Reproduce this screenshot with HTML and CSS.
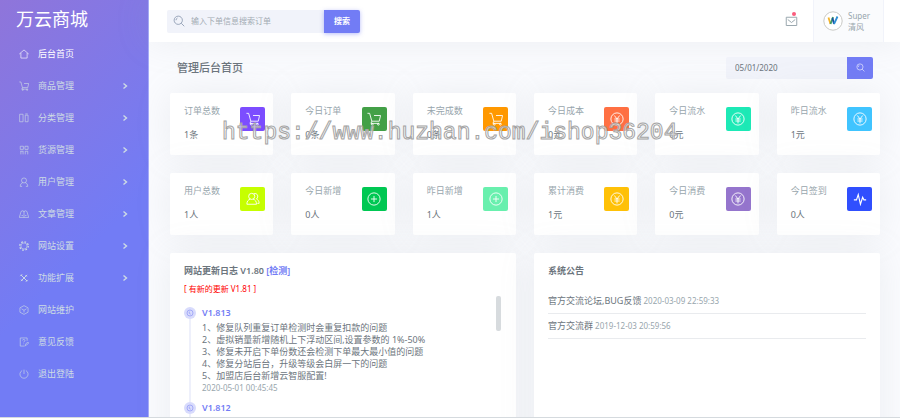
FILE: index.html
```html
<!DOCTYPE html>
<html lang="zh-CN">
<head>
  <meta charset="UTF-8">
  <meta name="viewport" content="width=device-width, initial-scale=1.0">
  <title>万云商城</title>
  <link rel="stylesheet" href="styles.css">
</head>
<body>
  <!-- Icon set -->
  <svg class="sprite" aria-hidden="true">
    <symbol id="i-home" viewBox="0 0 16 16"><path d="M.5 8L8 1.500 15.500 8M3 6.500v8h10v-8"/></symbol>
    <symbol id="i-cart" viewBox="0 0 16 16"><path d="M.5 1.500h2.500l2.500 9h8.500L15.500 4H8M5.500 10.500l-1 2.500h9.500"/><circle cx="6" cy="14" r="1"/><circle cx="13" cy="14" r="1"/></symbol>
    <symbol id="i-columns" viewBox="0 0 16 16"><path d="M1 2h5.500v12H1zM10 3.500h4.500V14H10zM10 1.500h4"/></symbol>
    <symbol id="i-grid" viewBox="0 0 16 16"><path d="M2 2h5v5H2zM9.500 2h5v5h-5zM2 10h5M3 10v5M6.500 10v5M10 10v5M14 10v5M10 10h4"/></symbol>
    <symbol id="i-user" viewBox="0 0 16 16"><circle cx="8" cy="5.500" r="4"/><path d="M6 9c-2.500 1-4 3-4 6h3M10 9c2.500 1 4 3 4 6h-3"/></symbol>
    <symbol id="i-book" viewBox="0 0 16 16"><path d="M8 13.500V5c0-3-4.500-3-5 0L.5 13.500h15L13 5c-.5-3-5-3-5 0M4 10.500h2.500M9.500 10.500H12"/></symbol>
    <symbol id="i-gear" viewBox="0 0 16 16"><circle cx="8" cy="8" r="5"/><circle cx="8" cy="8" r="6.800" stroke-width="2" stroke-dasharray="2.670 2.670"/></symbol>
    <symbol id="i-tools" viewBox="0 0 16 16"><path d="M3 3l10 10M13 3L3 13M2 5l3-3M10.500 3.500l2 2M3.500 10.500l2 2M11 14l3-3" stroke-width="1.500"/></symbol>
    <symbol id="i-box" viewBox="0 0 16 16"><path d="M8 1l6.500 3.500v7L8 15l-6.500-3.500v-7zM4 6l4 2.500L12 6M8 8.500V12"/></symbol>
    <symbol id="i-note" viewBox="0 0 16 16"><path d="M13 6V1.500H2v13h7M5.500 5.500c0-2 4-2 4 0 0 1.500-2 1.500-2 3M7.500 10.500v1M10 14l.5-2.500L14 8l1.500 1.500L12 13z"/></symbol>
    <symbol id="i-power" viewBox="0 0 16 16"><path d="M5 2.500a6.500 6.500 0 1 0 6 0M8 1v7"/></symbol>
    <symbol id="i-right" viewBox="0 0 8 8"><path d="M2.500 1.500L5.500 4 2.500 6.500" stroke-width="1.400"/></symbol>
    <symbol id="i-search" viewBox="0 0 16 16"><circle cx="7" cy="7" r="5.500"/><path d="M11 11l4 4M4 7a3 3 0 0 1 2-3"/></symbol>
    <symbol id="i-mail" viewBox="0 0 16 16"><path d="M1 3h14v11H1zM3 6l5 4 5-4" stroke-width="1.300"/></symbol>
    <symbol id="i-users" viewBox="0 0 16 16"><circle cx="6.500" cy="5" r="3.500"/><path d="M5 8c-2.500 1-4 2.500-4 6h11c0-3.500-1.500-5-4-6M9 2c4-1.500 6 3.500 3 6 2 1 3 2.500 3 5h-2"/></symbol>
    <symbol id="i-plus" viewBox="0 0 16 16"><circle cx="8" cy="8" r="7"/><path d="M8 4.500v7M4.500 8h7"/></symbol>
    <symbol id="i-yen" viewBox="0 0 16 16"><circle cx="8" cy="8" r="7"/><path d="M5 4l3 4 3-4M8 8v5M5 8h6M5 10.300h6"/></symbol>
    <symbol id="i-pulse" viewBox="0 0 16 16"><path d="M1 9h3l2-6 2.500 11L11 6l1.500 3H15" stroke-width="1.300"/></symbol>
    <symbol id="i-clock" viewBox="0 0 16 16"><circle cx="8" cy="8" r="6"/><path d="M6.500 5v3.500l3 2"/></symbol>
  </svg>

  <div class="wrapper">
    <!-- Sidebar -->
    <aside class="sidebar">
      <a class="logo" href="#">万云商城</a>
      <nav class="menu">
        <a class="active" href="#"><svg><use href="#i-home"/></svg><span>后台首页</span></a>
        <a href="#"><svg><use href="#i-cart"/></svg><span>商品管理</span><svg class="arrow"><use href="#i-right"/></svg></a>
        <a href="#"><svg><use href="#i-columns"/></svg><span>分类管理</span><svg class="arrow"><use href="#i-right"/></svg></a>
        <a href="#"><svg><use href="#i-grid"/></svg><span>货源管理</span><svg class="arrow"><use href="#i-right"/></svg></a>
        <a href="#"><svg><use href="#i-user"/></svg><span>用户管理</span><svg class="arrow"><use href="#i-right"/></svg></a>
        <a href="#"><svg><use href="#i-book"/></svg><span>文章管理</span><svg class="arrow"><use href="#i-right"/></svg></a>
        <a href="#"><svg><use href="#i-gear"/></svg><span>网站设置</span><svg class="arrow"><use href="#i-right"/></svg></a>
        <a href="#"><svg><use href="#i-tools"/></svg><span>功能扩展</span><svg class="arrow"><use href="#i-right"/></svg></a>
        <a href="#"><svg><use href="#i-box"/></svg><span>网站维护</span></a>
        <a href="#"><svg><use href="#i-note"/></svg><span>意见反馈</span></a>
        <a href="#"><svg><use href="#i-power"/></svg><span>退出登陆</span></a>
      </nav>
    </aside>

    <div class="content">
      <!-- Topbar -->
      <header class="topbar">
        <form class="search">
          <label class="search-box"><svg><use href="#i-search"/></svg><input type="text" placeholder="输入下单信息搜索订单" aria-label="搜索订单"></label>
          <button type="button">搜索</button>
        </form>
        <a class="mail" href="#" aria-label="消息"><svg><use href="#i-mail"/></svg><i class="dot"></i></a>
        <a class="profile" href="#">
          <svg class="avatar" viewBox="0 0 20 20">
            <circle cx="10" cy="10" r="9.200" fill="#fff" stroke="#c9c9c6"/>
            <path d="M5.500 6.500l2 6.500" stroke="#f3b32b" stroke-width="1.800"/>
            <path d="M7.500 13l2.500-7" stroke="#3d9b6a" stroke-width="1.800"/>
            <path d="M9.500 7l1.500 6" stroke="#1b4f9c" stroke-width="1.800"/>
            <path d="M11 13L14.500 5.500" stroke="#2d8fd5" stroke-width="1.800"/>
          </svg>
          <span>Super<br>清风</span>
        </a>
      </header>

      <main>
        <div class="title-row">
          <h1>管理后台首页</h1>
          <form class="date">
            <input type="text" value="05/01/2020" aria-label="日期">
            <button type="button" aria-label="查询"><svg><use href="#i-search"/></svg></button>
          </form>
        </div>

        <!-- Statistics -->
        <section class="stats">
          <div class="card stat"><div><h2>订单总数</h2><p>1条</p></div><span class="icon violet"><svg><use href="#i-cart"/></svg></span></div>
          <div class="card stat"><div><h2>今日订单</h2><p>0条</p></div><span class="icon green"><svg><use href="#i-cart"/></svg></span></div>
          <div class="card stat"><div><h2>未完成数</h2><p>0条</p></div><span class="icon orange"><svg><use href="#i-cart"/></svg></span></div>
          <div class="card stat"><div><h2>今日成本</h2><p>0元</p></div><span class="icon coral"><svg><use href="#i-yen"/></svg></span></div>
          <div class="card stat"><div><h2>今日流水</h2><p>0元</p></div><span class="icon teal"><svg><use href="#i-yen"/></svg></span></div>
          <div class="card stat"><div><h2>昨日流水</h2><p>1元</p></div><span class="icon sky"><svg><use href="#i-yen"/></svg></span></div>
          <div class="card stat"><div><h2>用户总数</h2><p>1人</p></div><span class="icon lime"><svg><use href="#i-users"/></svg></span></div>
          <div class="card stat"><div><h2>今日新增</h2><p>0人</p></div><span class="icon emerald"><svg><use href="#i-plus"/></svg></span></div>
          <div class="card stat"><div><h2>昨日新增</h2><p>1人</p></div><span class="icon mint"><svg><use href="#i-plus"/></svg></span></div>
          <div class="card stat"><div><h2>累计消费</h2><p>1元</p></div><span class="icon amber"><svg><use href="#i-yen"/></svg></span></div>
          <div class="card stat"><div><h2>今日消费</h2><p>0元</p></div><span class="icon purple"><svg><use href="#i-yen"/></svg></span></div>
          <div class="card stat"><div><h2>今日签到</h2><p>0人</p></div><span class="icon blue"><svg><use href="#i-pulse"/></svg></span></div>
        </section>

        <section class="panels">
          <!-- Update log -->
          <div class="card panel">
            <h3>网站更新日志 V1.80 <a href="#">[检测]</a></h3>
            <p class="update">[ 有新的更新 V1.81 ]</p>
            <div class="timeline">
              <div class="entry">
                <span class="marker"><svg><use href="#i-clock"/></svg></span>
                <div>
                  <h4>V1.813</h4>
                  <p>1、修复队列重复订单检测时会重复扣款的问题<br>
                  2、虚拟销量新增随机上下浮动区间,设置参数的 1%-50%<br>
                  3、修复未开启下单份数还会检测下单最大最小值的问题<br>
                  4、修复分站后台，升级等级会白屏一下的问题<br>
                  5、加盟店后台新增云智服配置!</p>
                  <time>2020-05-01 00:45:45</time>
                </div>
              </div>
              <div class="entry">
                <span class="marker"><svg><use href="#i-clock"/></svg></span>
                <div>
                  <h4>V1.812</h4>
                </div>
              </div>
              <i class="thumb"></i>
            </div>
          </div>

          <!-- Notices -->
          <div class="card panel">
            <h3>系统公告</h3>
            <ul class="notices">
              <li><a href="#">官方交流论坛,BUG反馈</a> <time>2020-03-09 22:59:33</time></li>
              <li><a href="#">官方交流群</a> <time>2019-12-03 20:59:56</time></li>
            </ul>
          </div>
        </section>
      </main>
    </div>
  </div>
  <div class="watermark">https://www.huzhan.com/ishop36204</div>
</body>
</html>
```

FILE: styles.css
```css
/* General */
* {
  box-sizing: border-box;
}
body {
  margin: 0;
  background: #fff;
  color: #6c757d;
  font-family: "Noto Sans", "Noto Sans CJK SC", sans-serif;
  font-size: 8px;
  line-height: 12px;
  overflow: hidden;
}
h1, h2, h3, h4, p, ul {
  margin: 0;
  padding: 0;
}
a {
  color: inherit;
  text-decoration: none;
}
input, button {
  font: inherit;
  border: 0;
  margin: 0;
}
svg {
  fill: none;
  stroke: currentColor;
  flex: none;
}
.sprite {
  display: none;
}
.wrapper {
  display: flex;
  height: calc(100vh - 1px);
  border-bottom: 1px solid #d5dade;
  overflow: hidden;
}

/* Sidebar */
.sidebar {
  width: 149px;
  flex: none;
  color: #cedce4;
  background: linear-gradient(135deg, #8f75da 0%, #727cf5 60%);
  border-right: 1px solid #a5abf8;
}
.logo {
  display: block;
  padding-left: 16px;
  color: #fff;
  font-size: 18px;
  line-height: 38px;
}
.menu a {
  display: flex;
  align-items: center;
  height: 32px;
  padding: 0 19px;
  font-size: 9px;
}
.menu svg {
  width: 10px;
  height: 10px;
}
.menu span {
  flex: 1;
  margin-left: 9px;
}
.menu .active {
  color: #fff;
}
.menu .arrow {
  width: 8px;
  height: 8px;
}

/* Topbar */
.content {
  flex: 1;
  min-width: 0;
  background: #fafbfe;
}
.topbar {
  display: flex;
  align-items: center;
  height: 42px;
  padding: 0 16px 0 18px;
  background: #fff;
  box-shadow: 0 0 35px rgba(154, 161, 171, 0.15);
}
.search {
  display: flex;
  margin-right: auto;
}
.search-box {
  display: flex;
  align-items: center;
  width: 157px;
  height: 23px;
  padding-left: 6px;
  background: #f1f3fa;
  border-radius: 2px 0 0 2px;
}
.search-box svg {
  width: 12px;
  height: 12px;
  color: #7d8da5;
}
.search-box input {
  flex: 1;
  min-width: 0;
  padding: 0 6px;
  background: none;
}
input {
  color: #6c757d;
}
input::placeholder {
  color: #a3abb3;
}
.search button {
  width: 36px;
  padding: 0;
  color: #fff;
  font-weight: bold;
  background: #727cf5;
  border-radius: 0 2px 2px 0;
  box-shadow: 0 1px 4px rgba(114, 124, 245, 0.5);
}
.mail {
  position: relative;
  display: flex;
  margin-right: 15px;
  color: #98a6ad;
}
.mail svg {
  width: 13px;
  height: 12px;
}
.dot {
  position: absolute;
  top: -3px;
  right: 2px;
  width: 4px;
  height: 4px;
  border-radius: 50%;
  background: #fa5c7c;
}
.profile {
  display: flex;
  align-items: center;
  gap: 5px;
  width: 71px;
  height: 42px;
  padding-left: 9px;
  color: #98a6ad;
  line-height: 11px;
  background: #fafbfd;
  border: 1px solid #f1f3fa;
  border-width: 0 1px;
}
.avatar {
  width: 20px;
  height: 20px;
}

/* Title row */
main {
  padding: 0 20px 0 21px;
}
.title-row {
  display: flex;
  justify-content: space-between;
  align-items: center;
  height: 51px;
  padding: 0 7px;
}
h1 {
  font-size: 11px;
  font-weight: 500;
}
.date {
  display: flex;
  height: 22px;
}
.date input {
  width: 121px;
  padding: 0 9px;
  background: #f1f3fa;
  border-radius: 2px 0 0 2px;
}
.date button {
  display: flex;
  align-items: center;
  justify-content: center;
  width: 26px;
  padding: 0;
  color: #fff;
  background: #727cf5;
  border-radius: 0 2px 2px 0;
}
.date svg {
  width: 9px;
  height: 9px;
}

/* Cards */
.card {
  background: #fff;
  border-radius: 2px;
  box-shadow: 0 0 35px rgba(154, 161, 171, 0.15);
}
.stats {
  display: grid;
  grid-template-columns: repeat(6, 1fr);
  gap: 18px;
}
.stat {
  display: flex;
  justify-content: space-between;
  padding: 11px 8px 13px 14px;
  font-size: 9px;
  line-height: 14px;
}
.stat h2 {
  margin-bottom: 10px;
  color: #98a6ad;
  font-size: 9px;
  font-weight: 400;
}
.icon {
  display: flex;
  align-items: center;
  justify-content: center;
  width: 25px;
  height: 24px;
  margin-top: 3px;
  color: #fff;
  border-radius: 2px;
}
.icon svg {
  width: 14px;
  height: 14px;
}
.violet { background: #7c4dff; }
.green { background: #43a047; }
.orange { background: #ff9800; }
.coral { background: #ff7043; }
.teal { background: #1de9b6; }
.sky { background: #40c4ff; }
.lime { background: #c6ff00; }
.emerald { background: #00c853; }
.mint { background: #69f0ae; }
.amber { background: #ffc107; }
.purple { background: #9575cd; }
.blue { background: #304ffe; }

/* Panels */
.panels {
  display: grid;
  grid-template-columns: 1fr 1fr;
  gap: 18px;
  margin-top: 18px;
}
.panel {
  min-height: 240px;
  padding: 11px 14px;
}
h3 {
  font-size: 9px;
  font-weight: 600;
  line-height: 14px;
}
h3 a, h4 {
  color: #727cf5;
}
.update {
  margin-top: 5px;
  color: #f00;
}
.timeline {
  position: relative;
  margin-top: 12px;
}
.entry {
  display: flex;
  gap: 6px;
  padding-bottom: 8px;
  background: linear-gradient(#eef0fb, #eef0fb) 5px 0 / 2px 100% no-repeat;
}
.entry p {
  font-size: 9px;
}
.entry time {
  display: block;
}
.marker {
  display: flex;
  align-items: center;
  justify-content: center;
  flex: none;
  width: 12px;
  height: 12px;
  color: #727cf5;
  background: #d8dbfc;
  border-radius: 50%;
}
.marker svg {
  width: 8px;
  height: 8px;
}
h4 {
  margin-bottom: 3px;
  font-size: 9px;
  font-weight: 600;
}
time {
  color: #98a6ad;
}
.thumb {
  position: absolute;
  top: -11px;
  right: 1px;
  width: 5px;
  height: 35px;
  border-radius: 2px;
  background: #d7dbde;
}
.notices {
  margin-top: 11px;
  list-style: none;
}
.notices li {
  padding: 6px 0;
  border-bottom: 1px solid #e9ebee;
}
.notices a {
  font-size: 9px;
}

/* Watermark over the page */
.watermark {
  position: absolute;
  top: 119px;
  left: 222px;
  color: rgba(255, 255, 255, 0.6);
  font-family: "Liberation Mono", monospace;
  font-size: 23px;
  line-height: 28px;
  -webkit-text-stroke: 1px #a3a3a3;
  pointer-events: none;
}
```
